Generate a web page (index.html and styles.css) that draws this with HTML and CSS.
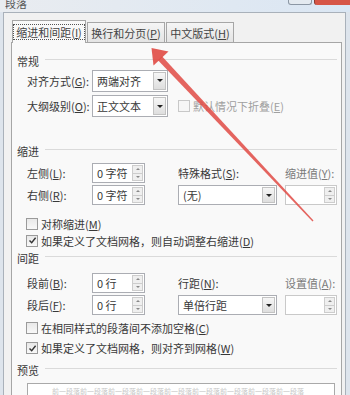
FILE: index.html
```html
<!DOCTYPE html>
<html lang="zh-CN">
<head>
    <meta charset="UTF-8">
    <meta name="viewport" content="width=device-width, initial-scale=1.0">
    <title>段落</title>
    <link rel="stylesheet" href="styles.css">
</head>
<body>
    <!-- Title bar -->
    <div class="titlebar">
        <span class="title">段落</span>
        <div class="caption">
            <span class="cap-btn"></span>
            <span class="cap-close"></span>
        </div>
    </div>

    <!-- Dialog body -->
    <div class="client">
        <div class="tabs">
            <div class="tab active"><span class="focus">缩进和间距(<u>I</u>)</span></div>
            <div class="tab"><span>换行和分页(<u>P</u>)</span></div>
            <div class="tab"><span>中文版式(<u>H</u>)</span></div>
        </div>

        <div class="panel">
            <div class="group-title"><span>常规</span><i></i></div>
            <div class="grid general">
                <label>对齐方式(<u>G</u>):</label>
                <div class="select tall short"><span>两端对齐</span><b class="drop"></b></div>
                <div></div>
                <label>大纲级别(<u>O</u>):</label>
                <div class="select tall short"><span>正文文本</span><b class="drop"></b></div>
                <div class="check disabled"><span class="box"></span><span>默认情况下折叠(<u>E</u>)</span></div>
            </div>

            <div class="group-title indent-title"><span>缩进</span><i></i></div>
            <div class="grid pairs indent-grid">
                <label>左侧(<u>L</u>):</label>
                <div class="spin"><span>0 字符</span><b class="arrows"><i class="up"></i><i class="down"></i></b></div>
                <label>特殊格式(<u>S</u>):</label>
                <label class="muted">缩进值(<u>Y</u>):</label>
                <label>右侧(<u>R</u>):</label>
                <div class="spin"><span>0 字符</span><b class="arrows"><i class="up"></i><i class="down"></i></b></div>
                <div class="select wide"><span>(无)</span><b class="drop"></b></div>
                <div class="spin empty"><span></span><b class="arrows"><i class="up"></i><i class="down"></i></b></div>
            </div>
            <div class="checks indent-checks">
                <div class="check"><span class="box"></span><span>对称缩进(<u>M</u>)</span></div>
                <div class="check"><span class="box"><svg viewBox="0 0 9 9" width="9" height="9"><path d="M1.5 4.5 L3.7 6.8 L7.6 1.8" fill="none" stroke="#333" stroke-width="1.4"/></svg></span><span>如果定义了文档网格，则自动调整右缩进(<u>D</u>)</span></div>
            </div>

            <div class="group-title spacing-title"><span>间距</span><i></i></div>
            <div class="grid pairs spacing-grid">
                <label>段前(<u>B</u>):</label>
                <div class="spin"><span>0 行</span><b class="arrows"><i class="up"></i><i class="down"></i></b></div>
                <label>行距(<u>N</u>):</label>
                <label class="muted">设置值(<u>A</u>):</label>
                <label>段后(<u>F</u>):</label>
                <div class="spin"><span>0 行</span><b class="arrows"><i class="up"></i><i class="down"></i></b></div>
                <div class="select wide"><span>单倍行距</span><b class="drop"></b></div>
                <div class="spin empty"><span></span><b class="arrows"><i class="up"></i><i class="down"></i></b></div>
            </div>
            <div class="checks spacing-checks">
                <div class="check"><span class="box"></span><span>在相同样式的段落间不添加空格(<u>C</u>)</span></div>
                <div class="check"><span class="box"><svg viewBox="0 0 9 9" width="9" height="9"><path d="M1.5 4.5 L3.7 6.8 L7.6 1.8" fill="none" stroke="#333" stroke-width="1.4"/></svg></span><span>如果定义了文档网格，则对齐到网格(<u>W</u>)</span></div>
            </div>

            <div class="group-title preview-title"><span>预览</span><i></i></div>
            <div class="preview">前一段落前一段落前一段落前一段落前一段落前一段落前一段落前一段落前一段落</div>
        </div>
    </div>

    <!-- Red annotation arrow drawn over the dialog -->
    <svg class="arrow" width="350" height="395" viewBox="0 0 350 395">
        <polygon points="158,60.2 162,56.2 313.5,220.5 312.5,221.5" fill="#e04a44" fill-opacity="0.85"/>
        <polygon points="151.5,48 168.5,51.5 153.5,65.5" fill="#e04a44" fill-opacity="0.9"/>
    </svg>
</body>
</html>
```

FILE: styles.css
```css
html {
    overflow: hidden;
}

body {
    margin: 0;
    width: 350px;
    height: 395px;
    overflow: hidden;
    position: relative;
    background: #dde4ec;
    font-family: "Noto Sans CJK SC", "Noto Sans", sans-serif;
    font-size: 11px;
    line-height: 14px;
    color: #383838;
}

u {
    text-decoration-thickness: 1px;
    text-underline-offset: 1px;
}

/* title bar */
.titlebar {
    display: flex;
    height: 12px;
    background: linear-gradient(to right, #e9ecf0, #dae6f3);
    overflow: hidden;
}

.title {
    margin: -4px 0 0 5px;
    color: #555;
}

.caption {
    display: flex;
    margin-left: auto;
    gap: 2px;
}

.cap-btn {
    width: 22px;
    height: 4px;
    background: #e4eaf0;
    border: 1px solid #8c97a4;
    border-top: none;
    border-radius: 0 0 3px 3px;
}

.cap-close {
    width: 35px;
    height: 5px;
    background: #d65546;
    border-left: 1px solid #8a3a30;
    border-radius: 0 0 0 3px;
}

/* client area */
.client {
    margin: 0 4px 0 3px;
    height: 382px;
    overflow: hidden;
    background: #f1f1f1;
    border: 1px solid #a9b1ba;
    border-bottom: none;
    padding: 0 3px 0 7px;
}

.tabs {
    display: flex;
    align-items: flex-end;
    height: 22px;
    margin: 7px 0 0 1px;
}

.tab {
    height: 19px;
    border: 1px solid #a6a6a6;
    border-bottom: none;
    background: linear-gradient(#f5f5f5, #e4e4e4);
    display: flex;
    align-items: center;
    justify-content: center;
    color: #444;
    margin-right: 1px;
}

.tab:nth-child(1) { width: 72px; }
.tab:nth-child(2) { width: 76px; }
.tab:nth-child(3) { width: 66px; }

.tab.active {
    position: relative;
    height: 22px;
    margin-bottom: -1px;
    background: #f9f9f9;
}

.tab .focus {
    outline: 1px dotted #555;
    outline-offset: 0;
    padding: 0 2px;
}

.panel {
    height: 341px;
    overflow: hidden;
    background: #f9f9f9;
    border: 1px solid #a6a6a6;
    border-bottom: none;
    padding: 11px 4px 0 5px;
}

/* group headings */
.group-title {
    display: flex;
    align-items: center;
    height: 14px;
}

.group-title i {
    flex: 1;
    height: 1px;
    background: #dadada;
    margin: 0 0 3px 6px;
}

.indent-title { margin-top: 25px; }
.spacing-title { margin-top: 2px; }
.preview-title { margin-top: 5px; }

/* control grids */
.grid {
    display: grid;
    grid-template-columns: 65px 86px 107px 1fr;
    align-items: center;
    margin-left: 10px;
}

.general {
    grid-template-columns: 65px 86px 1fr;
    grid-template-rows: 25px 26px;
}

.pairs {
    grid-template-rows: 22px 22px;
}

.indent-grid { margin-top: 4px; }
.spacing-grid { margin-top: 7px; }

.muted {
    color: #7a7a7a;
}

/* dropdowns */
.select {
    display: flex;
    box-sizing: border-box;
    height: 20px;
    border: 1px solid #abadb3;
    background: #fff;
}

.select.tall { height: 22px; }
.select.short { width: 76px; }
.select.wide { width: 99px; }

.select span {
    flex: 1;
    padding-left: 4px;
    align-self: center;
}

.drop {
    width: 11px;
    margin: 1px;
    border: 1px solid #c3c3c3;
    background: linear-gradient(#f6f6f6, #dedede);
    display: flex;
    align-items: center;
    justify-content: center;
}

.drop::after {
    content: "";
    border-left: 3px solid transparent;
    border-right: 3px solid transparent;
    border-top: 3px solid #222;
}

/* spin boxes */
.spin {
    display: flex;
    box-sizing: border-box;
    width: 53px;
    height: 20px;
    border: 1px solid #abadb3;
    background: #fff;
}

.spin span {
    flex: 1;
    padding-left: 4px;
    align-self: center;
}

.spin.empty {
    width: 52px;
    border-color: #c9c9c9;
}

.arrows {
    width: 11px;
    display: flex;
    flex-direction: column;
    margin: 1px;
}

.arrows i {
    flex: 1;
    border: 1px solid #cdcdcd;
    background: #efefef;
    display: flex;
    align-items: center;
    justify-content: center;
}

.arrows i + i {
    border-top: none;
}

.arrows .up::after {
    content: "";
    border-left: 2px solid transparent;
    border-right: 2px solid transparent;
    border-bottom: 2px solid #888;
}

.arrows .down::after {
    content: "";
    border-left: 2px solid transparent;
    border-right: 2px solid transparent;
    border-top: 2px solid #888;
}

/* checkboxes */
.check {
    display: flex;
    align-items: center;
    gap: 3px;
}

.box {
    width: 10px;
    height: 10px;
    border: 1px solid #9a9a9a;
    background: linear-gradient(#e8e8e8, #f8f8f8);
    display: flex;
    align-items: center;
    justify-content: center;
}

.check.disabled {
    color: #a0a0a0;
}

.check.disabled .box {
    border-color: #c8c8c8;
    background: #f6f6f6;
}

.checks {
    display: flex;
    flex-direction: column;
    margin-left: 9px;
}

.indent-checks {
    margin-top: 9px;
}

.indent-checks .check {
    height: 17px;
}

.spacing-checks {
    margin-top: 2px;
}

.spacing-checks .check {
    height: 20px;
}

/* preview */
.preview {
    height: 40px;
    margin: 6px 2px 0 10px;
    border: 1px solid #a9a9a9;
    background: #fff;
    padding: 3px 0 0 24px;
    font-size: 7px;
    line-height: 8px;
    color: #c6c6c6;
    white-space: nowrap;
    overflow: hidden;
}

/* annotation overlay */
.arrow {
    position: absolute;
    top: 0;
    left: 0;
    pointer-events: none;
}
```
